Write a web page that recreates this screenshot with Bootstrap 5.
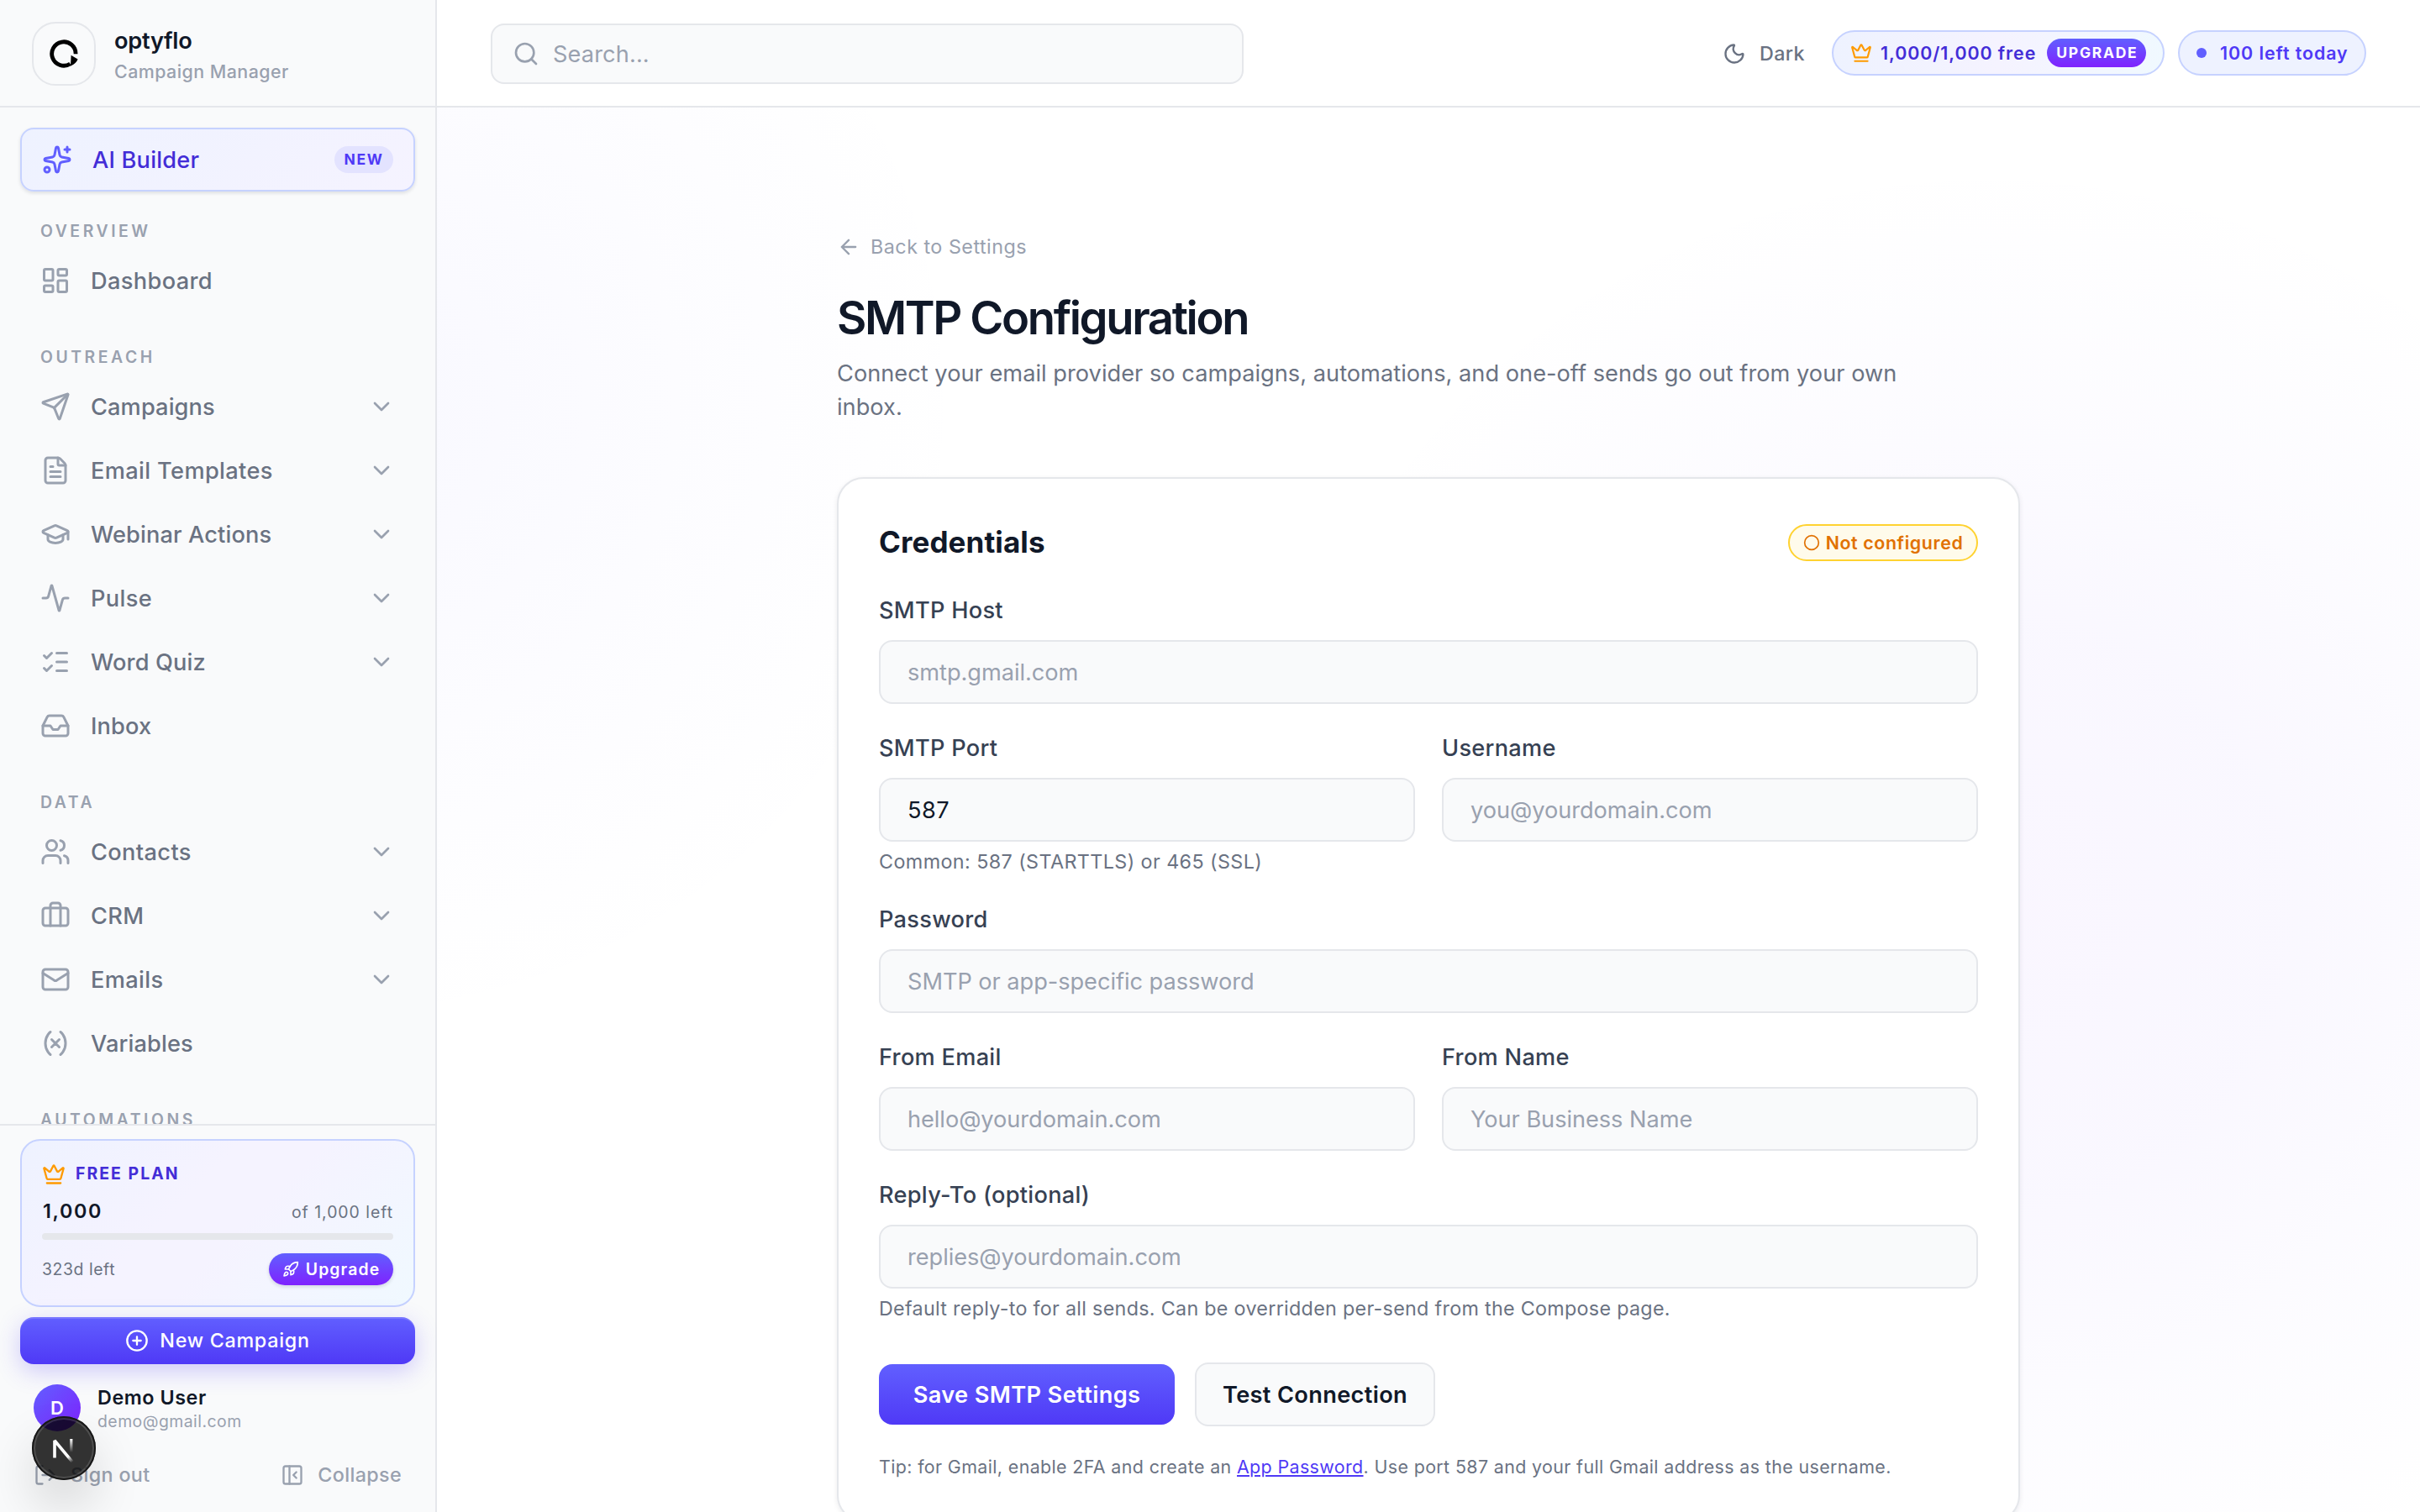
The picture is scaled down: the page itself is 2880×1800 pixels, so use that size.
<!DOCTYPE html>
<html lang="en">
<head>
<meta charset="utf-8">
<title>SMTP Configuration</title>
<meta name="viewport" content="width=device-width, initial-scale=1">
<link href="https://cdn.jsdelivr.net/npm/bootstrap@5.3.0/dist/css/bootstrap.min.css" rel="stylesheet">
<style>
:root{--ink:#101828;--ink-2:#364153;--muted:#6a7282;--faint:#99a1af;--line:#e5e7eb;--soft:#f9fafb;--ind:#4f39f6;--ind-dark:#432dd7}
html,body{height:100%}
body{font-family:Inter,"Noto Sans",sans-serif;color:var(--ink);background:#fff;overflow:hidden;font-size:27.2px}
.ico{fill:none;stroke:currentColor;stroke-width:2;stroke-linecap:round;stroke-linejoin:round;flex:none;display:block}
.i36{width:36px;height:36px}.i32{width:32px;height:32px}.i28{width:28px;height:28px}.i26{width:26px;height:26px}.i20{width:20px;height:20px}
.text-faint{color:var(--faint)}.text-soft{color:var(--muted)}
.fs-sm{font-size:19.4px}.fs-md{font-size:23.3px}
.tr-1{letter-spacing:.12px}.tr-4{letter-spacing:.36px}.tr-6{letter-spacing:.57px}.tr-8{letter-spacing:.72px}.tr-10{letter-spacing:.98px}.tr-17{letter-spacing:1.67px}.tr-21{letter-spacing:2.05px}
.shell{height:1800px}
.side{width:520px;background:var(--soft);border-right:2px solid var(--line);flex:none}
.brand{height:128px;border-bottom:2px solid var(--line);padding:2px 38px 0}
.brand-logo{width:76px;height:76px;border:2px solid var(--line);border-radius:28px;margin-right:22px}
.brand-text{margin-top:5px}
.brand-name{font-size:27.2px;font-weight:600;line-height:36px;letter-spacing:-.27px}
.brand-sub{font-size:21.4px;font-weight:500;line-height:36px;letter-spacing:.46px;color:var(--faint)}
.side-nav{padding:24px 24px 0;flex:1 1 0;min-height:0}
.ai-link{height:76px;border:2px solid #c6d2ff;border-radius:16px;background:linear-gradient(135deg,#eef2ff,#f5f3ff);padding:0 24px;color:var(--ind-dark);font-weight:500;box-shadow:0 2px 4px rgba(16,24,40,.12)}
.ai-link .i36{color:#615fff;margin-right:24px}
.ai-text{padding-top:2px;letter-spacing:.2px}
.pill-new{height:32px;width:70px;border-radius:16px;background:#e3e3ff;color:var(--ind);font-size:17.5px;font-weight:700;letter-spacing:1.6px}
.sec-label{height:30px;line-height:30px;margin:38px 0 6px 24px;font-size:19.4px;font-weight:600;letter-spacing:3.55px;color:var(--faint)}
.sec-first{margin-top:32px}
.side-link{height:76px;padding:0 24px;color:var(--muted);font-weight:500}
.side-link span{padding-top:2px}
.side-link .ico{color:var(--faint)}
.side-link .i36{margin-right:24px}
.side-foot{height:462px;border-top:2px solid var(--line);padding:16px 24px 16px;flex:none}
.plan{height:200px;border:2px solid #c6d2ff;border-radius:24px;padding:24px;background:linear-gradient(135deg,#eef2ff 0%,#f5f3ff 40%,#f5f3ff 55%,#f0f9ff 100%)}
.plan-head{height:30px;gap:12px;padding-top:2px;color:var(--ind-dark)}
.plan-count{height:32px;line-height:32px;margin-top:14px;padding-left:1px}
.amber{color:#fe9a00}
.plan-bar{height:8px;border-radius:4px;background:var(--line);margin:10px 0 16px}
.plan-days{padding-top:1px}
.grad-btn{background:linear-gradient(180deg,#615fff,#7f22fe);color:#fff}
.up-btn{width:148px;height:38px;border-radius:19px;font-weight:600;letter-spacing:1.1px;box-shadow:0 2px 4px rgba(16,24,40,.15)}
.up-btn span{padding-top:1px}
.new-btn{height:56px;gap:13px;border-radius:16px;margin-top:12px;color:#fff;font-weight:500;background:linear-gradient(180deg,#615fff,#4f39f6);box-shadow:inset 0 2px 0 rgba(255,255,255,.15),0 8px 28px rgba(79,57,246,.25)}
.user-row{height:56px;margin-top:24px;padding-left:16px;gap:20px}
.avatar{width:56px;height:56px;border-radius:50%;background:linear-gradient(135deg,#615fff,#7f22fe);color:#fff;font-weight:600;font-size:22px}
.user-name{line-height:32px}.user-mail{line-height:24px;letter-spacing:.48px}
.out-row{height:56px;margin-top:24px;padding:0 16px;color:var(--faint);font-weight:500}
.out-row .ico{margin-right:16px}
.dev-badge{position:absolute;left:38px;top:1686px;width:76px;height:76px;border-radius:50%;background:rgba(0,0,0,.8);box-shadow:inset 0 0 0 2px #171717,inset 0 0 0 4px rgba(255,255,255,.14),0 32px 64px -8px rgba(0,0,0,.24)}
.page{background:radial-gradient(circle 980px at 2367px 1087px,rgba(150,80,255,.052) 0%,rgba(130,85,255,.045) 35%,rgba(120,90,255,.018) 62%,rgba(120,90,255,0) 92%) -520px 0/2880px 1800px no-repeat,radial-gradient(circle 760px at -120px 480px,rgba(97,95,255,.042) 0%,rgba(97,95,255,.015) 60%,rgba(97,95,255,0) 100%),#fff}
.topbar{height:128px;background:rgba(255,255,255,.85);border-bottom:2px solid var(--line);padding:2px 64px 0;flex:none}
.search-box{width:896px;height:72px;border:2px solid var(--line);border-radius:16px;background:var(--soft);padding:0 24px;color:var(--faint)}
.search-box span{padding-top:2px}
.chip{height:54px;border:2px solid #c6d2ff;border-radius:27px;font-weight:600;font-size:21.4px;letter-spacing:.93px;margin-bottom:2px;white-space:nowrap}
.chip-plan{width:396px;padding:0 20px;gap:10px;background:linear-gradient(90deg,#eef2ff,#f5f3ff 50%,#f0f9ff);color:var(--ind-dark);margin-left:32px}
.chip-left{width:224px;padding:0 0 0 20px;gap:16px;background:#eef2ff;color:var(--ind);margin-left:16px}
.chip-up{width:118px;height:34px;border-radius:17px;font-size:17.5px;font-weight:700;letter-spacing:1.7px;padding-left:1.7px}
.dot{width:12px;height:12px;border-radius:50%;background:#615fff}
.col-main{width:1408px;padding-top:148px}
.back{height:36px;gap:12px;font-size:23.3px;letter-spacing:.5px;color:var(--faint)}
.page-title{font-size:54.4px;line-height:70px;font-weight:600;letter-spacing:-2.38px;margin:31px 0 0}
.page-sub{line-height:40px;letter-spacing:.02px;color:var(--muted);margin:12px 0 0;width:1344px}
.form-card{margin-top:63px;height:1244px;border:2px solid var(--line);border-radius:32px;background:#fff;padding:54px 48px 48px;box-shadow:0 2px 6px rgba(16,24,40,.08)}
.card-h{font-size:35px;font-weight:700;line-height:42px;letter-spacing:.1px;margin:0}
.status{height:44px;width:226px;border:2px solid #ffd230;border-radius:22px;background:#fffbeb;color:#e17100;font-size:21.4px;font-weight:600;letter-spacing:.6px;gap:7px}
.form-stack{gap:32px;margin-top:38px}
.form-label{display:block;line-height:42px;margin:0 0 14px;font-size:27.2px;font-weight:500;letter-spacing:.28px;color:var(--ink-2)}
.form-control,.form-control:focus{height:76px;border:2px solid var(--line);border-radius:16px;background:var(--soft);padding:0 32px;font-size:27.2px;letter-spacing:-.05px;color:var(--ink);box-shadow:none}
.form-control::placeholder{color:var(--faint);opacity:1}
.form-control.val-num{letter-spacing:.5px}
.pair{--bs-gutter-x:32px;--bs-gutter-y:0}
.hint{line-height:32px;margin-top:8px;font-size:23.3px;letter-spacing:.42px;color:var(--muted)}
.hint-long{letter-spacing:.3px}
.form-actions{margin-top:48px;gap:24px}
.btn-save{width:352px;height:72px;border-radius:16px;font-size:27.2px;letter-spacing:.36px;font-weight:600;color:#fff;border:0;background:linear-gradient(180deg,#615fff,#4f39f6)}
.btn-test{width:286px;height:76px;border-radius:16px;font-size:27.2px;letter-spacing:.34px;font-weight:600;color:var(--ink);border:2px solid var(--line);background:var(--soft)}
.form-actions span{display:inline-block;padding-top:2px}
.tip{font-size:21.4px;line-height:32px;letter-spacing:.38px;color:var(--muted);margin:32px 0 0}
.tip a{color:var(--ind)}
</style>
</head>
<body>
<svg width="0" height="0" class="position-absolute"><defs>
<symbol id="sparkles" viewBox="0 0 24 24"><path d="M11.017 2.814a1 1 0 0 1 1.966 0l1.051 5.558a2 2 0 0 0 1.594 1.594l5.558 1.051a1 1 0 0 1 0 1.966l-5.558 1.051a2 2 0 0 0-1.594 1.594l-1.051 5.558a1 1 0 0 1-1.966 0l-1.051-5.558a2 2 0 0 0-1.594-1.594l-5.558-1.051a1 1 0 0 1 0-1.966l5.558-1.051a2 2 0 0 0 1.594-1.594z"/><path d="M20 2v4M22 4h-4"/><circle cx="4" cy="20" r="2"/></symbol>
<symbol id="dash" viewBox="0 0 24 24"><rect width="7" height="9" x="3" y="3" rx="1"/><rect width="7" height="5" x="14" y="3" rx="1"/><rect width="7" height="9" x="14" y="12" rx="1"/><rect width="7" height="5" x="3" y="16" rx="1"/></symbol>
<symbol id="send" viewBox="0 0 24 24"><path d="M14.536 21.686a.5.5 0 0 0 .937-.024l6.5-19a.496.496 0 0 0-.635-.635l-19 6.5a.5.5 0 0 0-.024.937l7.93 3.18a2 2 0 0 1 1.112 1.11z"/><path d="m21.854 2.147-10.94 10.939"/></symbol>
<symbol id="filetext" viewBox="0 0 24 24"><path d="M6 22a2 2 0 0 1-2-2V4a2 2 0 0 1 2-2h8a2.4 2.4 0 0 1 1.704.706l3.588 3.588A2.4 2.4 0 0 1 20 8v12a2 2 0 0 1-2 2z"/><path d="M14 2v5a1 1 0 0 0 1 1h5M10 9H8M16 13H8M16 17H8"/></symbol>
<symbol id="grad" viewBox="0 0 24 24"><path d="M21.42 10.922a1 1 0 0 0-.019-1.838L12.83 5.18a2 2 0 0 0-1.66 0L2.6 9.08a1 1 0 0 0 0 1.832l8.57 3.908a2 2 0 0 0 1.66 0z"/><path d="M22 10v6"/><path d="M6 12.5V16a6 3 0 0 0 12 0v-3.5"/></symbol>
<symbol id="pulse" viewBox="0 0 24 24"><path d="M22 12h-2.48a2 2 0 0 0-1.93 1.46l-2.35 8.36a.25.25 0 0 1-.48 0L9.24 2.18a.25.25 0 0 0-.48 0l-2.35 8.36A2 2 0 0 1 4.49 12H2"/></symbol>
<symbol id="checks" viewBox="0 0 24 24"><path d="M13 5h8M13 12h8M13 19h8M3 17l2 2 4-4M3 7l2 2 4-4"/></symbol>
<symbol id="inbox" viewBox="0 0 24 24"><path d="M22 12h-6l-2 3h-4l-2-3H2"/><path d="M5.45 5.11 2 12v6a2 2 0 0 0 2 2h16a2 2 0 0 0 2-2v-6l-3.45-6.89A2 2 0 0 0 16.76 4H7.24a2 2 0 0 0-1.79 1.11z"/></symbol>
<symbol id="users" viewBox="0 0 24 24"><path d="M16 21v-2a4 4 0 0 0-4-4H6a4 4 0 0 0-4 4v2"/><path d="M16 3.128a4 4 0 0 1 0 7.744"/><path d="M22 21v-2a4 4 0 0 0-3-3.87"/><circle cx="9" cy="7" r="4"/></symbol>
<symbol id="case" viewBox="0 0 24 24"><path d="M16 20V4a2 2 0 0 0-2-2h-4a2 2 0 0 0-2 2v16"/><rect width="20" height="14" x="2" y="6" rx="2"/></symbol>
<symbol id="mail" viewBox="0 0 24 24"><path d="m22 7-8.991 5.727a2 2 0 0 1-2.009 0L2 7"/><rect x="2" y="4" width="20" height="16" rx="2"/></symbol>
<symbol id="variable" viewBox="0 0 24 24"><path d="M8 21s-4-3-4-9 4-9 4-9M16 3s4 3 4 9-4 9-4 9M15 9l-6 6M9 9l6 6"/></symbol>
<symbol id="chev" viewBox="0 0 24 24"><path d="m6 9 6 6 6-6"/></symbol>
<symbol id="crown" viewBox="0 0 24 24"><path d="M11.562 3.266a.5.5 0 0 1 .876 0L15.39 8.87a1 1 0 0 0 1.516.294L21.183 5.5a.5.5 0 0 1 .798.519l-2.834 10.246a1 1 0 0 1-.956.734H5.81a1 1 0 0 1-.957-.734L2.02 6.02a.5.5 0 0 1 .798-.519l4.276 3.664a1 1 0 0 0 1.516-.294z"/><path d="M5 21h14"/></symbol>
<symbol id="rocket" viewBox="0 0 24 24"><path d="M4.5 16.5c-1.5 1.26-2 5-2 5s3.74-.5 5-2c.71-.84.7-2.13-.09-2.91a2.18 2.18 0 0 0-2.91-.09z"/><path d="m12 15-3-3a22 22 0 0 1 2-3.95A12.88 12.88 0 0 1 22 2c0 2.72-.78 7.5-6 11a22.35 22.35 0 0 1-4 2z"/><path d="M9 12H4s.55-3.03 2-4c1.62-1.08 5 0 5 0M12 15v5s3.03-.55 4-2c1.08-1.62 0-5 0-5"/></symbol>
<symbol id="plus" viewBox="0 0 24 24"><circle cx="12" cy="12" r="10"/><path d="M8 12h8M12 8v8"/></symbol>
<symbol id="logout" viewBox="0 0 24 24"><path d="m16 17 5-5-5-5M21 12H9M9 21H5a2 2 0 0 1-2-2V5a2 2 0 0 1 2-2h4"/></symbol>
<symbol id="panel" viewBox="0 0 24 24"><rect width="18" height="18" x="3" y="3" rx="2"/><path d="M9 3v18M16 15l-3-3 3-3"/></symbol>
<symbol id="search" viewBox="0 0 24 24"><path d="m21 21-4.34-4.34"/><circle cx="11" cy="11" r="8"/></symbol>
<symbol id="moon" viewBox="0 0 24 24"><path d="M20.985 12.486a9 9 0 1 1-9.473-9.472c.405-.022.617.46.402.803a6 6 0 0 0 8.268 8.268c.344-.215.825-.004.803.401"/></symbol>
<symbol id="left" viewBox="0 0 24 24"><path d="m12 19-7-7 7-7M19 12H5"/></symbol>
<symbol id="ring" viewBox="0 0 24 24"><circle cx="12" cy="12" r="10"/></symbol>
</defs></svg>

<div class="shell d-flex position-relative">
  <aside class="side d-flex flex-column">
    <div class="brand d-flex align-items-center">
      <div class="brand-logo d-flex align-items-center justify-content-center">
        <svg width="36" height="36" viewBox="0 0 36 36"><path d="M32.1 18.2A14.2 14.2 0 1 0 25.5 30" fill="none" stroke="#000" stroke-width="4.8"/><path d="M26.6 19.8 34.6 24.6Q32.6 30 26 32.4Z"/></svg>
      </div>
      <div class="brand-text">
        <div class="brand-name">optyflo</div>
        <div class="brand-sub">Campaign Manager</div>
      </div>
    </div>
    <nav class="side-nav overflow-hidden">
      <div class="ai-link d-flex align-items-center"><svg class="ico i36"><use href="#sparkles"/></svg><span class="ai-text">AI Builder</span><span class="pill-new ms-auto d-flex align-items-center justify-content-center">NEW</span></div>
      <div class="sec-label sec-first">OVERVIEW</div>
      <div class="side-link d-flex align-items-center"><svg class="ico i36"><use href="#dash"/></svg><span class="tr-4">Dashboard</span></div>
      <div class="sec-label">OUTREACH</div>
      <div class="side-link d-flex align-items-center"><svg class="ico i36"><use href="#send"/></svg><span class="tr-1">Campaigns</span><svg class="ico i32 ms-auto"><use href="#chev"/></svg></div>
      <div class="side-link d-flex align-items-center"><svg class="ico i36"><use href="#filetext"/></svg><span class="tr-4">Email Templates</span><svg class="ico i32 ms-auto"><use href="#chev"/></svg></div>
      <div class="side-link d-flex align-items-center"><svg class="ico i36"><use href="#grad"/></svg><span class="tr-1">Webinar Actions</span><svg class="ico i32 ms-auto"><use href="#chev"/></svg></div>
      <div class="side-link d-flex align-items-center"><svg class="ico i36"><use href="#pulse"/></svg><span class="tr-4">Pulse</span><svg class="ico i32 ms-auto"><use href="#chev"/></svg></div>
      <div class="side-link d-flex align-items-center"><svg class="ico i36"><use href="#checks"/></svg><span class="tr-1">Word Quiz</span><svg class="ico i32 ms-auto"><use href="#chev"/></svg></div>
      <div class="side-link d-flex align-items-center"><svg class="ico i36"><use href="#inbox"/></svg><span class="tr-1">Inbox</span></div>
      <div class="sec-label">DATA</div>
      <div class="side-link d-flex align-items-center"><svg class="ico i36"><use href="#users"/></svg><span class="tr-4">Contacts</span><svg class="ico i32 ms-auto"><use href="#chev"/></svg></div>
      <div class="side-link d-flex align-items-center"><svg class="ico i36"><use href="#case"/></svg><span class="tr-4">CRM</span><svg class="ico i32 ms-auto"><use href="#chev"/></svg></div>
      <div class="side-link d-flex align-items-center"><svg class="ico i36"><use href="#mail"/></svg><span class="tr-4">Emails</span><svg class="ico i32 ms-auto"><use href="#chev"/></svg></div>
      <div class="side-link d-flex align-items-center"><svg class="ico i36"><use href="#variable"/></svg><span class="tr-1">Variables</span></div>
      <div class="sec-label">AUTOMATIONS</div>
    </nav>
    <div class="side-foot">
      <div class="plan">
        <div class="plan-head d-flex align-items-center"><svg class="ico i28 amber"><use href="#crown"/></svg><span class="fs-sm fw-bold tr-21">FREE PLAN</span></div>
        <div class="plan-count d-flex justify-content-between align-items-baseline"><span class="fs-md fw-semibold tr-17">1,000</span><span class="fs-sm text-soft tr-10">of 1,000 left</span></div>
        <div class="plan-bar"></div>
        <div class="d-flex justify-content-between align-items-center"><span class="plan-days fs-sm text-soft tr-6">323d left</span><span class="grad-btn up-btn fs-sm d-flex align-items-center justify-content-center gap-2"><svg class="ico i20"><use href="#rocket"/></svg><span>Upgrade</span></span></div>
      </div>
      <div class="new-btn fs-md tr-8 d-flex align-items-center justify-content-center"><svg class="ico i28"><use href="#plus"/></svg>New Campaign</div>
      <div class="user-row d-flex">
        <span class="avatar d-flex align-items-center justify-content-center">D</span>
        <div><div class="user-name fs-md fw-semibold tr-6">Demo User</div><div class="user-mail fs-sm text-faint">demo@gmail.com</div></div>
      </div>
      <div class="out-row fs-md tr-4 d-flex align-items-center"><svg class="ico i28"><use href="#logout"/></svg><span>Sign out</span><svg class="ico i28 ms-auto"><use href="#panel"/></svg><span>Collapse</span></div>
    </div>
  </aside>

  <main class="page flex-grow-1 d-flex flex-column overflow-hidden">
    <header class="topbar d-flex align-items-center">
      <div class="search-box d-flex align-items-center gap-3 tr-1"><svg class="ico i32"><use href="#search"/></svg><span>Search...</span></div>
      <span class="ms-auto d-flex align-items-center gap-3 fs-md fw-medium text-soft tr-4"><svg class="ico i28"><use href="#moon"/></svg>Dark</span>
      <span class="chip chip-plan d-flex align-items-center"><svg class="ico i26 amber"><use href="#crown"/></svg>1,000/1,000 free<span class="grad-btn chip-up ms-auto d-flex align-items-center justify-content-center">UPGRADE</span></span>
      <span class="chip chip-left d-flex align-items-center"><span class="dot"></span>100 left today</span>
    </header>
    <div class="col-main mx-auto">
      <div class="back d-flex align-items-center"><svg class="ico i28"><use href="#left"/></svg>Back to Settings</div>
      <h1 class="page-title">SMTP Configuration</h1>
      <p class="page-sub">Connect your email provider so campaigns, automations, and one-off sends go out from your own<br>inbox.</p>
      <div class="form-card d-flex flex-column">
        <div class="d-flex justify-content-between">
          <h2 class="card-h">Credentials</h2>
          <span class="status d-flex align-items-center justify-content-center"><svg class="ico i20"><use href="#ring"/></svg>Not configured</span>
        </div>
        <div class="form-stack d-flex flex-column">
          <div><label class="form-label">SMTP Host</label><input class="form-control tr-1" placeholder="smtp.gmail.com"></div>
          <div class="row pair">
            <div class="col-6"><label class="form-label">SMTP Port</label><input class="form-control val-num" value="587"><div class="hint">Common: 587 (STARTTLS) or 465 (SSL)</div></div>
            <div class="col-6"><label class="form-label">Username</label><input class="form-control" placeholder="you@yourdomain.com"></div>
          </div>
          <div><label class="form-label">Password</label><input class="form-control" placeholder="SMTP or app-specific password"></div>
          <div class="row pair">
            <div class="col-6"><label class="form-label">From Email</label><input class="form-control" placeholder="hello@yourdomain.com"></div>
            <div class="col-6"><label class="form-label">From Name</label><input class="form-control" placeholder="Your Business Name"></div>
          </div>
          <div><label class="form-label">Reply-To (optional)</label><input class="form-control" placeholder="replies@yourdomain.com"><div class="hint hint-long">Default reply-to for all sends. Can be overridden per-send from the Compose page.</div></div>
        </div>
        <div class="form-actions d-flex align-items-center"><button class="btn btn-save p-0"><span>Save SMTP Settings</span></button><button class="btn btn-test p-0"><span>Test Connection</span></button></div>
        <p class="tip">Tip: for Gmail, enable 2FA and create an <a href="#">App Password</a>. Use port 587 and your full Gmail address as the username.</p>
      </div>
    </div>
  </main>

  <div class="dev-badge">
    <svg width="76" height="76" viewBox="0 0 76 76" fill="none" class="d-block">
      <defs>
        <linearGradient id="fadeA" gradientUnits="userSpaceOnUse" x1="38" y1="39" x2="49" y2="54"><stop offset="0" stop-color="#fff"/><stop offset=".55" stop-color="#fff"/><stop offset="1" stop-color="#fff" stop-opacity="0"/></linearGradient>
        <linearGradient id="fadeB" gradientUnits="userSpaceOnUse" x1="0" y1="27" x2="0" y2="43"><stop offset="0" stop-color="#fff"/><stop offset="1" stop-color="#fff" stop-opacity="0"/></linearGradient>
      </defs>
      <path d="M27 49.6V29L48.4 54.6" stroke="url(#fadeA)" stroke-width="3.6" stroke-linejoin="bevel"/>
      <path d="M46.8 27v16" stroke="url(#fadeB)" stroke-width="3.2"/>
    </svg>
  </div>
</div>
<script src="https://cdn.jsdelivr.net/npm/bootstrap@5.3.0/dist/js/bootstrap.bundle.min.js"></script>
</body>
</html>
